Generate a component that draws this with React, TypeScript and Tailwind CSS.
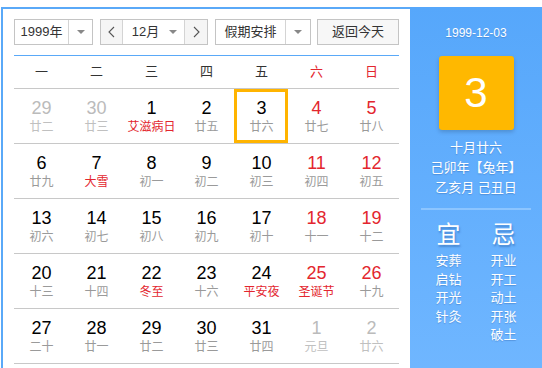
type Day = { d: number; l: string; other?: boolean; red?: boolean; fest?: boolean; sel?: boolean };

const weeks: Day[][] = [
  [
    { d: 29, l: '廿二', other: true },
    { d: 30, l: '廿三', other: true },
    { d: 1, l: '艾滋病日', fest: true },
    { d: 2, l: '廿五' },
    { d: 3, l: '廿六', sel: true },
    { d: 4, l: '廿七', red: true },
    { d: 5, l: '廿八', red: true },
  ],
  [
    { d: 6, l: '廿九' },
    { d: 7, l: '大雪', fest: true },
    { d: 8, l: '初一' },
    { d: 9, l: '初二' },
    { d: 10, l: '初三' },
    { d: 11, l: '初四', red: true },
    { d: 12, l: '初五', red: true },
  ],
  [
    { d: 13, l: '初六' },
    { d: 14, l: '初七' },
    { d: 15, l: '初八' },
    { d: 16, l: '初九' },
    { d: 17, l: '初十' },
    { d: 18, l: '十一', red: true },
    { d: 19, l: '十二', red: true },
  ],
  [
    { d: 20, l: '十三' },
    { d: 21, l: '十四' },
    { d: 22, l: '冬至', fest: true },
    { d: 23, l: '十六' },
    { d: 24, l: '平安夜', fest: true },
    { d: 25, l: '圣诞节', fest: true, red: true },
    { d: 26, l: '十九', red: true },
  ],
  [
    { d: 27, l: '二十' },
    { d: 28, l: '廿一' },
    { d: 29, l: '廿二' },
    { d: 30, l: '廿三' },
    { d: 31, l: '廿四' },
    { d: 1, l: '元旦', other: true },
    { d: 2, l: '廿六', other: true },
  ],
];

const weekNames = ['一', '二', '三', '四', '五', '六', '日'];

function Caret() {
  return <span className="block w-0 h-0 border-l-[4px] border-r-[4px] border-t-[4px] border-l-transparent border-r-transparent border-t-[#888]" />;
}

function Chevron({ right }: { right?: boolean }) {
  return (
    <svg width="7" height="12" viewBox="0 0 7 12" fill="none">
      <polyline
        points={right ? '1,1 6,6 1,11' : '6,1 1,6 6,11'}
        stroke="#555"
        strokeWidth="1.1"
      />
    </svg>
  );
}

export default function App() {
  return (
    <div
      className="pt-[7px] pl-px bg-white w-[542px] h-[368px] overflow-hidden"
      style={{ fontFamily: '"Liberation Sans", Arial, "Noto Sans CJK SC", sans-serif' }}
    >
      <div className="flex">
        {/* Left: calendar */}
        <div className="w-[409px] border-t-2 border-l-2 border-[#5aa9f8] px-[11px] pt-[10px]">
          {/* Toolbar */}
          <div className="flex items-center gap-[7px] text-[13px] text-[#333]">
            <div className="flex h-[26px] w-[79px] border border-[#c4c4c4]">
              <div className="flex-1 flex items-center justify-center border-r border-[#d4d4d4]">1999年</div>
              <div className="w-[23px] flex items-center justify-center">
                <Caret />
              </div>
            </div>
            <div className="flex h-[26px] w-[108px] border border-[#c4c4c4]">
              <div className="w-[22px] flex items-center justify-center bg-[#f5f5f5] border-r border-[#d4d4d4]">
                <Chevron />
              </div>
              <div className="flex-1 flex items-center justify-center gap-[10px] pl-[2px]">
                <span>12月</span>
                <Caret />
              </div>
              <div className="w-[23px] flex items-center justify-center bg-[#f5f5f5] border-l border-[#d4d4d4]">
                <Chevron right />
              </div>
            </div>
            <div className="flex h-[26px] w-[96px] border border-[#c4c4c4]">
              <div className="flex-1 flex items-center justify-center border-r border-[#d4d4d4]">假期安排</div>
              <div className="w-[24px] flex items-center justify-center">
                <Caret />
              </div>
            </div>
            <div className="flex h-[26px] w-[82px] items-center justify-center border border-[#c4c4c4] bg-[#f7f7f7] ml-[-1px]">
              返回今天
            </div>
          </div>

          <div className="mt-[10px] h-px bg-[#5aa9f8]" />

          {/* Week header */}
          <div className="grid grid-cols-7 h-[33px] border-b border-[#c8c8c8] text-[13px] text-[#333]">
            {weekNames.map((w, i) => (
              <div key={w} className={`flex items-center justify-center ${i > 4 ? 'text-[#e3262e]' : ''}`}>
                {w}
              </div>
            ))}
          </div>

          {/* Days */}
          {weeks.map((row, ri) => (
            <div key={ri} className="grid grid-cols-7 h-[55px] border-b border-[#c8c8c8]">
              {row.map((c, ci) => {
                const numColor = c.other ? 'text-[#bbbbbb]' : c.red ? 'text-[#e3262e]' : 'text-black';
                const lunarColor = c.other ? 'text-[#c0c0c0]' : c.fest ? 'text-[#e3262e]' : 'text-[#9a9a9a]';
                return (
                  <div key={ci} className="relative flex flex-col items-center pt-[8px]">
                    {c.sel && <div className="absolute left-0 top-0 w-[54px] h-[54px] border-[3px] border-[#ffb400]" />}
                    <div className={`text-[18px] leading-[22px] ${numColor}`}>{c.d}</div>
                    <div className={`text-[12px] leading-[16px] whitespace-nowrap ${lunarColor}`}>{c.l}</div>
                  </div>
                );
              })}
            </div>
          ))}
        </div>

        {/* Right: detail panel */}
        <div className="w-[132px] h-[361px] bg-gradient-to-b from-[#56a7fb] to-[#6fb6ff] text-white flex flex-col items-center [text-shadow:0_1px_1px_rgba(40,90,160,0.35)]">
          <div className="mt-[19px] text-[12px] leading-[14px]">1999-12-03</div>
          <div className="mt-[16px] w-[75px] h-[74px] rounded-[3px] bg-[#ffb800] shadow-[0_2px_4px_rgba(0,0,0,0.18)] flex items-center justify-center text-[42px] leading-none [text-shadow:none]">
            3
          </div>
          <div className="mt-[8px] text-[13px] leading-[20px] text-center">
            <div>十月廿六</div>
            <div>己卯年【兔年】</div>
            <div>乙亥月 己丑日</div>
          </div>
          <div className="mt-[10px] h-[2px] w-[110px] bg-[#8cc5ff]" />
          <div className="mt-[12px] flex gap-[15px]">
            <div className="w-[40px] flex flex-col items-center">
              <div className="text-[24px] leading-[26px] mb-[4px] [text-shadow:1px_2px_2px_rgba(30,80,150,0.45)]">宜</div>
              <div className="text-[13px] leading-[18.5px] text-center">
                <div>安葬</div>
                <div>启钻</div>
                <div>开光</div>
                <div>针灸</div>
              </div>
            </div>
            <div className="w-[40px] flex flex-col items-center">
              <div className="text-[24px] leading-[26px] mb-[4px] [text-shadow:1px_2px_2px_rgba(30,80,150,0.45)]">忌</div>
              <div className="text-[13px] leading-[18.5px] text-center">
                <div>开业</div>
                <div>开工</div>
                <div>动土</div>
                <div>开张</div>
                <div>破土</div>
              </div>
            </div>
          </div>
        </div>
      </div>
    </div>
  );
}
